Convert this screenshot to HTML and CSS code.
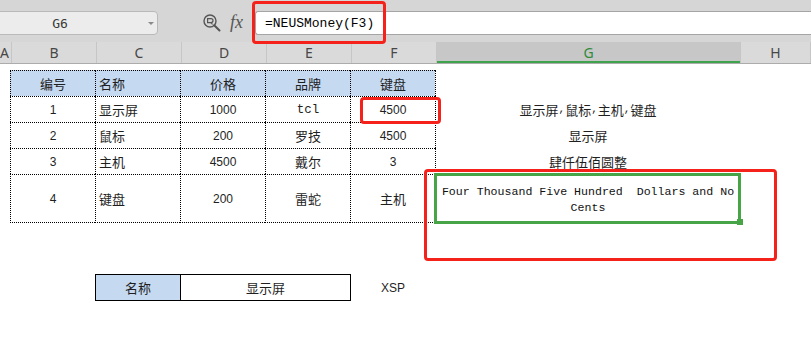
FILE: index.html
```html
<!DOCTYPE html>
<html lang="zh">
<head>
<meta charset="utf-8">
<title>Sheet</title>
<link rel="stylesheet" href="styles.css">
</head>
<body>
<div class="app">
  <div class="toolbar">
    <div class="namebox"><span class="cellref">G6</span><span class="caret"></span></div>
    <svg class="zoomicon" width="18" height="18" viewBox="0 0 18 18">
      <circle cx="7" cy="7" r="6" fill="none" stroke="#555" stroke-width="1.4"/>
      <path d="M4.6 9.2 V4.6 H8 a2 2 0 0 1 0 4 H4.6 M7.6 8.6 L9.6 10.4" fill="none" stroke="#555" stroke-width="1.2"/>
      <path d="M11.2 11.2 L16.5 16.5" stroke="#555" stroke-width="2" stroke-linecap="round"/>
    </svg>
    <span class="fx">fx</span>
    <div class="formula">=NEUSMoney(F3)</div>
  </div>

  <div class="colheads">
    <div class="ch ch-a">A</div>
    <div class="ch">B</div>
    <div class="ch">C</div>
    <div class="ch">D</div>
    <div class="ch">E</div>
    <div class="ch">F</div>
    <div class="ch sel">G</div>
    <div class="ch">H</div>
  </div>

  <div class="sheet">
    <div class="row h26">
      <div class="c"></div>
      <div class="c t hd">编号</div>
      <div class="c t hd left">名称</div>
      <div class="c t hd">价格</div>
      <div class="c t hd">品牌</div>
      <div class="c t hd">键盘</div>
      <div class="c gl"></div>
      <div class="c"></div>
    </div>
    <div class="row h26">
      <div class="c"></div>
      <div class="c t num">1</div>
      <div class="c t left">显示屏</div>
      <div class="c t num">1000</div>
      <div class="c t mono">tcl</div>
      <div class="c t num">4500</div>
      <div class="c gl">显示屏<span class="cm">,</span>鼠标<span class="cm">,</span>主机<span class="cm">,</span>键盘</div>
      <div class="c"></div>
    </div>
    <div class="row h26">
      <div class="c"></div>
      <div class="c t num">2</div>
      <div class="c t left">鼠标</div>
      <div class="c t num">200</div>
      <div class="c t">罗技</div>
      <div class="c t num">4500</div>
      <div class="c gl">显示屏</div>
      <div class="c"></div>
    </div>
    <div class="row h26">
      <div class="c"></div>
      <div class="c t num">3</div>
      <div class="c t left">主机</div>
      <div class="c t num">4500</div>
      <div class="c t">戴尔</div>
      <div class="c t num">3</div>
      <div class="c gl">肆仟伍佰圆整</div>
      <div class="c"></div>
    </div>
    <div class="row h49 lastrow">
      <div class="c"></div>
      <div class="c t num">4</div>
      <div class="c t left">键盘</div>
      <div class="c t num">200</div>
      <div class="c t">雷蛇</div>
      <div class="c t">主机</div>
      <div class="c gl eng">Four Thousand Five Hundred  Dollars and No<br>Cents</div>
      <div class="c"></div>
    </div>
    <div class="row h51"></div>
    <div class="row h27">
      <div class="c"></div>
      <div class="c"></div>
      <div class="c b hd">名称</div>
      <div class="c b span2">显示屏</div>
      <div class="c bl xsp">XSP</div>
      <div class="c"></div>
      <div class="c"></div>
    </div>
  </div>

  <div class="selbox"></div>
  <div class="handle"></div>
  <div class="ann ann-formula"></div>
  <div class="ann ann-f"></div>
  <div class="ann ann-g"></div>
</div>
</body>
</html>
```

FILE: styles.css
```css
body {
  margin: 0;
  background: #fff;
  font-family: "Liberation Sans", "Noto Sans CJK SC", sans-serif;
  color: #1f1f1f;
}

.app {
  position: relative;
  width: 811px;
  height: 362px;
  overflow: hidden;
}

/* toolbar */
.toolbar {
  height: 42px;
  box-sizing: border-box;
  padding-top: 11px;
  background: #d6d6d6;
  display: flex;
  align-items: flex-start;
}

.namebox {
  margin-left: -6px;
  width: 164px;
  height: 24px;
  box-sizing: border-box;
  border: 1px solid #b9b9b9;
  border-radius: 4px;
  background: #ececec;
  display: flex;
  align-items: center;
}

.cellref {
  flex: 1;
  text-align: center;
  padding-right: 23px;
  font-family: "DejaVu Sans Mono", monospace;
  font-size: 13px;
  color: #3a3a3a;
}

.caret {
  width: 0;
  height: 0;
  margin-right: 3px;
  border-left: 3px solid transparent;
  border-right: 3px solid transparent;
  border-top: 3px solid #8a8a8a;
}

.zoomicon {
  margin-left: 45px;
  margin-top: 3px;
}

.fx {
  margin-left: 9px;
  width: 16px;
  height: 24px;
  line-height: 22px;
  font-family: "Liberation Serif", serif;
  font-style: italic;
  font-size: 18px;
  color: #555;
}

.formula {
  flex: 1;
  margin-left: 9px;
  height: 24px;
  box-sizing: border-box;
  background: #fff;
  border: 1px solid #a5a5a5;
  border-right: none;
  border-radius: 3px 0 0 3px;
  padding-left: 9px;
  display: flex;
  align-items: center;
  font-family: "Liberation Mono", monospace;
  font-size: 13px;
  color: #000;
}

/* column headers */
.colheads {
  display: grid;
  grid-template-columns: 12px 85px 85px 85px 85px 85px 304px 1fr;
  height: 22px;
  box-sizing: border-box;
  background: #dadada;
  border-bottom: 1px solid #acacac;
}

.ch {
  box-sizing: border-box;
  border-right: 1px solid #c6c6c6;
  display: flex;
  align-items: center;
  justify-content: center;
  font-family: "Noto Sans", sans-serif;
  font-size: 14px;
  color: #474747;
}

.ch-a {
  justify-content: flex-end;
  padding-right: 2px;
}

.ch.sel {
  background: #c7c7c7;
  color: #2f8a3c;
  box-shadow: inset 0 -2px 0 #3fa34d;
}

/* sheet */
.sheet {
  padding-top: 6px;
}

.row {
  display: grid;
  grid-template-columns: 10px 85px 85px 85px 85px 85px 305px 1fr;
}

.h26 { height: 26px; }
.h27 { height: 27px; }
.h49 { height: 49px; }
.h51 { height: 51px; }

.c {
  box-sizing: border-box;
  display: flex;
  align-items: center;
  justify-content: center;
  font-size: 13px;
}

.t {
  border-left: 1px dotted #000;
  border-top: 1px dotted #000;
}

.lastrow .t {
  border-bottom: 1px dotted #000;
}

.gl {
  border-left: 1px dotted #000;
}

.hd {
  background: #c5d9f1;
}

.left {
  justify-content: flex-start;
  padding-left: 3px;
}

.num {
  font-size: 12px;
}

.mono {
  font-family: "Liberation Mono", monospace;
  font-size: 12.5px;
}

.cm {
  font-family: "Liberation Mono", monospace;
  font-size: 11px;
}

.eng {
  font-family: "Liberation Mono", monospace;
  font-size: 11.6px;
  line-height: 16px;
  padding-top: 3px;
  white-space: pre;
  text-align: center;
  color: #111;
}

.b {
  border: 1px solid #000;
  border-right: none;
}

.span2 {
  grid-column: span 2;
}

.bl {
  border-left: 1px solid #000;
}

.xsp {
  font-size: 12px;
}

/* selection + annotations (overlays) */
.selbox {
  position: absolute;
  left: 434px;
  top: 173px;
  width: 307px;
  height: 51px;
  box-sizing: border-box;
  border: 3px solid #47a547;
}

.handle {
  position: absolute;
  left: 737px;
  top: 219px;
  width: 6px;
  height: 6px;
  background: #47a547;
}

.ann {
  position: absolute;
  box-sizing: border-box;
  border: 3px solid #f5221b;
  border-radius: 4px;
}

.ann-formula {
  left: 252px;
  top: 1px;
  width: 134px;
  height: 43px;
}

.ann-f {
  left: 360px;
  top: 97px;
  width: 81px;
  height: 27px;
}

.ann-g {
  left: 424px;
  top: 169px;
  width: 353px;
  height: 92px;
}
```
